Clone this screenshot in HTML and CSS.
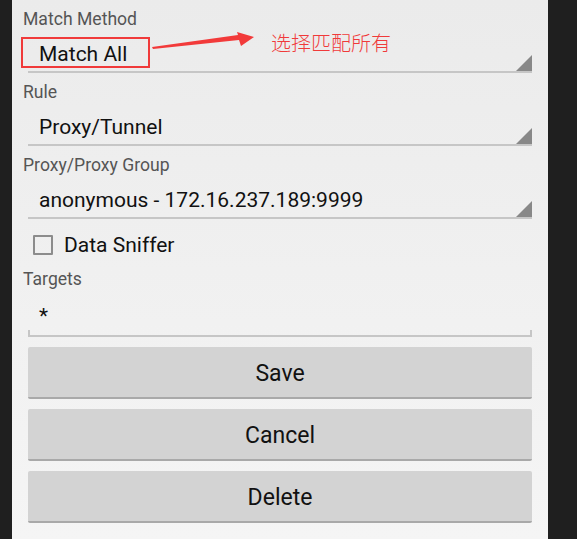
FILE: index.html
```html
<!DOCTYPE html>
<html lang="en">
<head>
<meta charset="utf-8">
<title>Rule</title>
<link rel="stylesheet" href="styles.css">
</head>
<body>
<div class="frame">
  <div class="panel">
    <div class="field">
      <div class="label">Match Method</div>
      <div class="spinner">
        <span class="value">Match All</span>
        <span class="tri"></span>
      </div>
    </div>
    <div class="field">
      <div class="label">Rule</div>
      <div class="spinner">
        <span class="value">Proxy/Tunnel</span>
        <span class="tri"></span>
      </div>
    </div>
    <div class="field">
      <div class="label">Proxy/Proxy Group</div>
      <div class="spinner">
        <span class="value">anonymous - 172.16.237.189:9999</span>
        <span class="tri"></span>
      </div>
    </div>
    <label class="check">
      <span class="box"></span>
      <span class="check-text">Data Sniffer</span>
    </label>
    <div class="field">
      <div class="label">Targets</div>
      <div class="edit"><span class="value">*</span></div>
    </div>
    <div class="buttons">
      <div class="btn">Save</div>
      <div class="btn">Cancel</div>
      <div class="btn">Delete</div>
    </div>

    <div class="annot-box"></div>
    <svg class="annot-arrow" width="110" height="24" viewBox="0 0 110 24">
      <polygon points="0,15 86,3 85,0 102,5 89,14 87,8 1,17" fill="#f23a3a"/>
    </svg>
    <div class="annot-text">选择匹配所有</div>
  </div>
  <div class="side"></div>
</div>
</body>
</html>
```
FILE: styles.css
```css
html, body {
  margin: 0;
  padding: 0;
  background: #1f1f1f;
}
body {
  font-family: Roboto, "Noto Sans", sans-serif;
}
.frame {
  display: flex;
  width: 577px;
  height: 539px;
  padding-left: 12px;
  box-sizing: border-box;
}
.panel {
  position: relative;
  width: 536px;
  height: 539px;
  background: linear-gradient(#ebebeb, #f5f5f5);
  padding: 0 16px 0 11px;
  box-sizing: border-box;
  display: flex;
  flex-direction: column;
}
.side {
  flex: 1;
  background: #1f1f1f;
}
.field {
  display: flex;
  flex-direction: column;
}
.label {
  margin-top: 9px;
  font-size: 17.6px;
  line-height: 20px;
  color: #555;
}
.spinner {
  position: relative;
  margin-left: 5px;
  height: 44px;
  box-sizing: border-box;
  border-bottom: 2px solid #c6c6c6;
  padding: 13px 0 0 11px;
  font-size: 21px;
  line-height: 24px;
  color: #111;
}
.tri {
  position: absolute;
  right: 0;
  bottom: 0;
  width: 0;
  height: 0;
  border-style: solid;
  border-width: 0 0 16px 16px;
  border-color: transparent transparent #888 transparent;
}
.check {
  display: flex;
  align-items: center;
  margin-top: 14px;
  margin-bottom: 3px;
  margin-left: 10px;
  height: 24px;
}
.box {
  width: 20px;
  height: 20px;
  box-sizing: border-box;
  border: 2px solid #8c8c8c;
  border-radius: 1px;
}
.check-text {
  margin-left: 11px;
  font-size: 21px;
  line-height: 24px;
  color: #111;
}
.edit {
  position: relative;
  margin-left: 5px;
  height: 48px;
  box-sizing: border-box;
  border-bottom: 2px solid #c6c6c6;
  padding: 15px 0 0 11px;
  font-size: 21px;
  line-height: 24px;
  color: #111;
}
.edit::before, .edit::after {
  content: "";
  position: absolute;
  bottom: 0;
  width: 2px;
  height: 5px;
  background: #c6c6c6;
}
.edit::before { left: 0; }
.edit::after { right: 0; }
.buttons {
  display: flex;
  flex-direction: column;
  gap: 10px;
  margin: 10px 0 0 5px;
}
.btn {
  height: 52px;
  box-sizing: border-box;
  background: #d3d3d3;
  border-bottom: 2px solid #a9a9a9;
  border-radius: 2px;
  display: flex;
  align-items: center;
  justify-content: center;
  padding-top: 3px;
  font-size: 23px;
  color: #111;
}
.annot-box {
  position: absolute;
  left: 9px;
  top: 37px;
  width: 129px;
  height: 31px;
  box-sizing: border-box;
  border: 2px solid #f03a3a;
}
.annot-arrow {
  position: absolute;
  left: 140px;
  top: 32px;
}
.annot-text {
  position: absolute;
  left: 259px;
  top: 31px;
  font-family: "Noto Sans CJK SC", sans-serif;
  font-weight: 300;
  font-size: 20px;
  line-height: 24px;
  color: #f03a3a;
}
```
